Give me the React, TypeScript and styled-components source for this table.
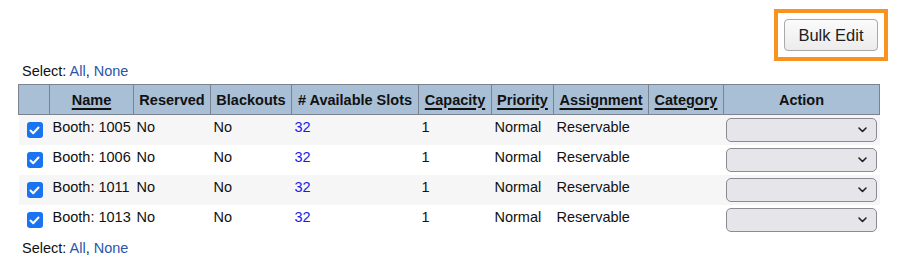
import React from 'react';
import styled, { createGlobalStyle } from 'styled-components';

const GlobalStyle = createGlobalStyle`
  body {
    margin: 0;
    background: #ffffff;
    font-family: 'Liberation Sans', Arial, sans-serif;
    font-size: 14.5px;
    color: #111;
  }
`;

const booths = ['1005', '1006', '1011', '1013'];

const Page = () => (
  <StyledWrapper>
    <GlobalStyle />
    <div className="toolbar">
      <div className="highlight">
        <button className="bulk-btn">Bulk Edit</button>
      </div>
    </div>
    <SelectLine>
      Select: <a>All</a>, <a>None</a>
    </SelectLine>
    <Table>
      <colgroup>
        <col style={{ width: 31 }} />
        <col style={{ width: 84 }} />
        <col style={{ width: 77 }} />
        <col style={{ width: 81 }} />
        <col style={{ width: 127 }} />
        <col style={{ width: 73 }} />
        <col style={{ width: 62 }} />
        <col style={{ width: 95 }} />
        <col style={{ width: 75 }} />
        <col />
      </colgroup>
      <thead>
        <tr>
          <HeadCell />
          <HeadCell $link>Name</HeadCell>
          <HeadCell>Reserved</HeadCell>
          <HeadCell>Blackouts</HeadCell>
          <HeadCell># Available Slots</HeadCell>
          <HeadCell $link>Capacity</HeadCell>
          <HeadCell $link>Priority</HeadCell>
          <HeadCell $link>Assignment</HeadCell>
          <HeadCell $link>Category</HeadCell>
          <HeadCell>Action</HeadCell>
        </tr>
      </thead>
      <tbody>
        {booths.map((b, i) => (
          <Row key={b} $striped={i % 2 === 0}>
            <td className="check">
              <Check>
                <svg width="11" height="9" viewBox="0 0 11 9">
                  <path d="M1.5 4.5 L4.2 7.2 L9.5 1.5" fill="none" stroke="#fff" strokeWidth="2" strokeLinecap="round" strokeLinejoin="round" />
                </svg>
              </Check>
            </td>
            <td>Booth: {b}</td>
            <td>No</td>
            <td>No</td>
            <td><SlotLink>32</SlotLink></td>
            <td>1</td>
            <td>Normal</td>
            <td>Reservable</td>
            <td></td>
            <td className="action">
              <Dropdown>
                <svg width="9" height="6" viewBox="0 0 9 6">
                  <path d="M1 1 L4.5 4.5 L8 1" fill="none" stroke="#222" strokeWidth="1.6" strokeLinecap="round" strokeLinejoin="round" />
                </svg>
              </Dropdown>
            </td>
          </Row>
        ))}
      </tbody>
    </Table>
    <SelectLine $bottom>
      Select: <a>All</a>, <a>None</a>
    </SelectLine>
  </StyledWrapper>
);

export default function App() {
  return <Page />;
}

const StyledWrapper = styled.div`
  padding: 9px 0 0 18px;
  width: 862px;
  .toolbar {
    display: flex;
    justify-content: flex-end;
    margin-right: -8px;
  }
  .highlight {
    border: 4px solid #f7931e;
    padding: 6px;
  }
  .bulk-btn {
    width: 94px;
    height: 32px;
    background: linear-gradient(#fbfbfb, #ececec);
    border: 1px solid #a9a9a9;
    border-radius: 4px;
    font-family: 'Liberation Sans', Arial, sans-serif;
    font-size: 16.5px;
    color: #1d1d1d;
    padding: 0;
  }
`;

const SelectLine = styled.div<{ $bottom?: boolean }>`
  padding-left: 4px;
  margin-top: ${(p) => (p.$bottom ? '5px' : '2px')};
  margin-bottom: 5px;
  a {
    color: #2a56a8;
  }
`;

const Table = styled.table`
  width: 862px;
  table-layout: fixed;
  border-collapse: collapse;
  td {
    padding: 4px 3px 0;
    line-height: 17px;
    vertical-align: top;
    white-space: nowrap;
  }
  td.check {
    padding: 0 0 0 8px;
    vertical-align: middle;
  }
  td.action {
    padding: 0 2px;
    vertical-align: middle;
  }
`;

const HeadCell = styled.th<{ $link?: boolean }>`
  height: 29px;
  background: #a8bfd6;
  border: 1px solid #7b8290;
  font-weight: bold;
  color: #111;
  padding: 0 3px;
  white-space: nowrap;
  text-decoration: ${(p) => (p.$link ? 'underline' : 'none')};
  text-decoration-thickness: 2px;
  text-underline-offset: 3px;
`;

const Row = styled.tr<{ $striped: boolean }>`
  height: 30px;
  background: ${(p) => (p.$striped ? '#f6f6f6' : '#ffffff')};
`;

const Check = styled.span`
  display: flex;
  align-items: center;
  justify-content: center;
  width: 16px;
  height: 16px;
  margin-top: 1px;
  border-radius: 3px;
  background: #1a73f0;
`;

const SlotLink = styled.a`
  color: #1a1aee;
`;

const Dropdown = styled.div`
  display: flex;
  align-items: center;
  justify-content: flex-end;
  height: 24px;
  width: 151px;
  padding-right: 9px;
  box-sizing: border-box;
  background: #e6e5ea;
  border: 1px solid #8a8a93;
  border-radius: 5px;
`;
